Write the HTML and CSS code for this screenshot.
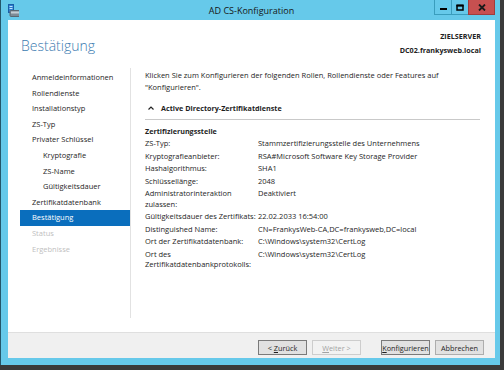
FILE: index.html
```html
<!DOCTYPE html>
<html lang="de">
<head>
	<meta charset="UTF-8">
	<title>AD CS-Konfiguration</title>
	<link rel="stylesheet" href="styles.css">
</head>
<body>
	<div class="window">
		<div class="titlebar">
			<div class="app-icon">
				<svg width="11" height="13" viewBox="0 0 11 13">
					<rect x="0.5" y="0.5" width="5" height="8" fill="#2f7fd0" stroke="#1a5fa8"/>
					<rect x="1.5" y="2" width="3" height="1" fill="#bfe3ff"/>
					<rect x="1.5" y="4" width="3" height="1" fill="#bfe3ff"/>
					<rect x="2" y="6.5" width="10" height="6" rx="1" fill="#7d8a95" stroke="#5b6770"/>
					<rect x="3" y="7.5" width="8" height="2" fill="#c3ccd3"/>
				</svg>
			</div>
			<div class="title">AD CS-Konfiguration</div>
			<div class="caption-buttons">
				<span class="cbtn"><svg width="7" height="6" viewBox="0 0 7 6"><rect x="0" y="4" width="7" height="2" fill="#000"/></svg></span>
				<span class="cbtn"><svg width="8" height="7" viewBox="0 0 8 7"><rect x="1" y="1.5" width="6" height="4.5" fill="none" stroke="#000" stroke-width="1.5"/><rect x="0.5" y="0.5" width="7" height="2" fill="#000"/></svg></span>
				<span class="cbtn close"><svg width="8" height="7" viewBox="0 0 8 7"><path d="M1 0.5 L7 6.5 M7 0.5 L1 6.5" stroke="#1a1a1a" stroke-width="1.8"/></svg></span>
			</div>
		</div>

		<div class="client">
			<div class="header">
				<h1>Bestätigung</h1>
				<div class="server">
					<div>ZIELSERVER</div>
					<div>DC02.frankysweb.local</div>
				</div>
			</div>

			<div class="main">
				<ul class="nav">
					<li>Anmeldeinformationen</li>
					<li>Rollendienste</li>
					<li>Installationstyp</li>
					<li>ZS-Typ</li>
					<li>Privater Schlüssel</li>
					<li class="sub">Kryptografie</li>
					<li class="sub">ZS-Name</li>
					<li class="sub">Gültigkeitsdauer</li>
					<li>Zertifikatdatenbank</li>
					<li class="active">Bestätigung</li>
					<li class="disabled">Status</li>
					<li class="disabled">Ergebnisse</li>
				</ul>

				<div class="content">
					<p class="intro">Klicken Sie zum Konfigurieren der folgenden Rollen, Rollendienste oder Features auf<br>"Konfigurieren".</p>
					<div class="section-head">
						<svg width="6" height="4" viewBox="0 0 6 4"><path d="M0.5 3.5 L3 1 L5.5 3.5" fill="none" stroke="#222" stroke-width="1.2"/></svg>
						<span>Active Directory-Zertifikatdienste</span>
					</div>
					<div class="group-title">Zertifizierungsstelle</div>
					<dl class="props">
						<dt>ZS-Typ:</dt>
						<dd>Stammzertifizierungsstelle des Unternehmens</dd>
						<dt>Kryptografieanbieter:</dt>
						<dd>RSA#Microsoft Software Key Storage Provider</dd>
						<dt>Hashalgorithmus:</dt>
						<dd>SHA1</dd>
						<dt>Schlüssellänge:</dt>
						<dd>2048</dd>
						<dt>Administratorinteraktion<br>zulassen:</dt>
						<dd>Deaktiviert</dd>
						<dt>Gültigkeitsdauer des Zertifikats:</dt>
						<dd>22.02.2033 16:54:00</dd>
						<dt>Distinguished Name:</dt>
						<dd>CN=FrankysWeb-CA,DC=frankysweb,DC=local</dd>
						<dt>Ort der Zertifikatdatenbank:</dt>
						<dd>C:\Windows\system32\CertLog</dd>
						<dt>Ort des<br>Zertifikatdatenbankprotokolls:</dt>
						<dd>C:\Windows\system32\CertLog</dd>
					</dl>
				</div>
			</div>

			<div class="footer">
				<button class="btn default">&lt; <u>Z</u>urück</button>
				<button class="btn" disabled><u>W</u>eiter &gt;</button>
				<button class="btn default gap"><u>K</u>onfigurieren</button>
				<button class="btn">Abbrechen</button>
			</div>
		</div>
	</div>
</body>
</html>
```

FILE: styles.css
```css
*{
	margin: 0;
	padding: 0;
	list-style: none;
}
body{
	width: 504px;
	height: 370px;
	overflow: hidden;
	background: #3a3a3a;
	font-family: "Open Sans", "Noto Sans", sans-serif;
	font-size: 7.5px;
	color: #1e1e1e;
}
.window{
	width: 500px;
	height: 365px;
	box-sizing: border-box;
	background: #66c9ea;
	border-left: 1px solid #24566a;
	padding: 0 5px 7px 7px;
	display: flex;
	flex-direction: column;
}

/* title bar */
.titlebar{
	height: 20px;
	flex-shrink: 0;
	display: grid;
	grid-template-columns: 1fr auto 1fr;
	align-items: start;
}
.app-icon{
	padding-top: 4px;
}
.app-icon svg{
	display: block;
}
.title{
	font-size: 9px;
	line-height: 21px;
	color: #161616;
}
.caption-buttons{
	justify-self: end;
	display: flex;
}
.cbtn{
	width: 18px;
	height: 15px;
	box-sizing: border-box;
	border: 1px solid #3a9dbd;
	border-top: none;
	margin-left: -1px;
	display: flex;
	align-items: center;
	justify-content: center;
}
.cbtn.close{
	width: 27px;
	background: #c75050;
	border-color: #a03d3d;
}

/* client */
.client{
	flex: 1;
	min-height: 0;
	background: #fff;
	display: flex;
	flex-direction: column;
}
.header{
	height: 48px;
	flex-shrink: 0;
	display: flex;
	justify-content: space-between;
	padding: 0 14px 0 13px;
}
.header h1{
	font-size: 14px;
	font-weight: 300;
	line-height: 18px;
	padding-top: 17px;
	color: #3b7bb0;
}
.server{
	text-align: right;
	font-size: 7.2px;
	font-weight: 700;
	line-height: 14px;
	padding-top: 9px;
	color: #222;
}

.main{
	flex: 1;
	min-height: 0;
	display: flex;
	padding-bottom: 14px;
}
.nav{
	width: 110px;
	margin-left: 12px;
	border-right: 1px solid #e2e2e2;
	padding-top: 2px;
}
.nav li{
	line-height: 15.6px;
	padding-left: 12px;
	color: #262626;
}
.nav .sub{
	padding-left: 23px;
}
.nav .active{
	background: #0a6ebd;
	color: #fff;
}
.nav .disabled{
	color: #c0c0c0;
}

.content{
	flex: 1;
	padding: 0 15px 0 14px;
}
.intro{
	line-height: 11.5px;
	margin-top: 2px;
}
.section-head{
	display: flex;
	align-items: center;
	gap: 7px;
	margin-top: 9.5px;
	padding: 0 0 5.5px 3px;
	line-height: 11px;
	font-size: 7.2px;
	font-weight: 700;
	border-bottom: 1px solid #c9c9c9;
}
.section-head svg{
	display: block;
}
.group-title{
	margin-top: 5.5px;
	line-height: 10.5px;
	font-size: 7.2px;
	font-weight: 700;
}
.props{
	margin-top: 2px;
	display: grid;
	grid-template-columns: 113px 1fr;
	row-gap: 2px;
	line-height: 10.5px;
}
.props dt{
	white-space: nowrap;
}

/* footer */
.footer{
	height: 26px;
	flex-shrink: 0;
	box-sizing: border-box;
	background: #f0f0f0;
	border-top: 1px solid #dfdfdf;
	display: flex;
	justify-content: flex-end;
	align-items: flex-start;
	padding: 7px 11px 0 0;
}
.btn{
	width: 49px;
	height: 15px;
	margin-left: 5px;
	font-family: inherit;
	font-size: 7.3px;
	color: #1e1e1e;
	background: #e1e1e1;
	border: 1px solid #adadad;
}
.btn.default{
	border-color: #7a7a7a;
}
.btn.gap{
	margin-left: 20px;
}
.btn:disabled{
	color: #a2a2a2;
	background: #f2f2f2;
	border-color: #cdcdcd;
}
```
